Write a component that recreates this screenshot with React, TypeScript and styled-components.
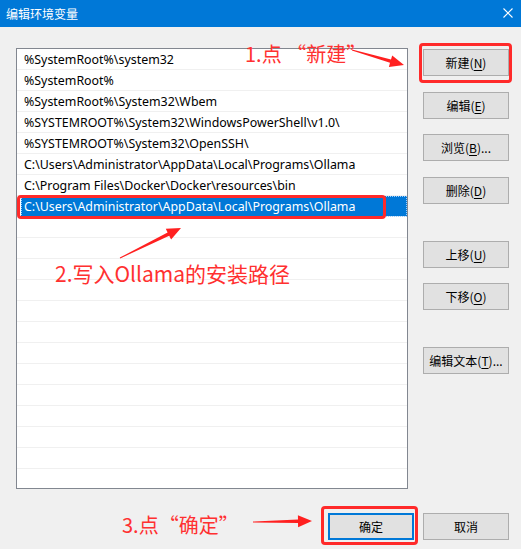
import React from "react";
import styled, { createGlobalStyle } from "styled-components";

const Global = createGlobalStyle`
  html, body { margin: 0; padding: 0; background: #f0f0f0; }
  * { box-sizing: border-box; }
`;

const UI_FONT = `"Noto Sans", "Noto Sans CJK SC", sans-serif`;
const CJK_FONT = `"Noto Sans CJK SC", "Noto Sans", sans-serif`;

const Window = styled.div`
  position: relative;
  width: 521px;
  height: 549px;
  background: #f0f0f0;
  font-family: ${CJK_FONT};
  overflow: hidden;
`;

const TitleBar = styled.div`
  height: 27px;
  background: #0078d7;
  color: #fff;
  display: flex;
  align-items: center;
  justify-content: space-between;
  padding: 0 8px 0 6px;
  font-size: 12px;
`;

const CloseIcon = styled.svg`
  width: 10px;
  height: 10px;
  display: block;
  margin-top: -2px;
`;

const Body = styled.div`
  display: flex;
  align-items: flex-start;
  gap: 15px;
  padding: 21px 12px 0 16px;
`;

const List = styled.div`
  width: 392px;
  height: 441px;
  background: #fff;
  border: 1px solid #828790;
  overflow: hidden;
`;

const Row = styled.div<{ $selected?: boolean }>`
  height: 21px;
  border-bottom: 1px solid #f0f0f0;
  display: flex;
  align-items: center;
  font-family: ${UI_FONT};
  font-size: 12.4px;
  color: ${(p) => (p.$selected ? "#fff" : "#000")};
  padding-left: ${(p) => (p.$selected ? "3px" : "7px")};
  margin-left: ${(p) => (p.$selected ? "4px" : "0")};
  background: ${(p) => (p.$selected ? "#0078d7" : "transparent")};
  outline: ${(p) => (p.$selected ? "1px dotted #9fd0ff" : "none")};
  outline-offset: -1px;
  white-space: nowrap;
`;

const ButtonColumn = styled.div`
  display: flex;
  flex-direction: column;
  padding-top: 1px;
`;

const Button = styled.button<{ $gap?: number; $default?: boolean }>`
  width: 86px;
  height: 27px;
  flex: none;
  margin-top: ${(p) => p.$gap ?? 0}px;
  background: #e1e1e1;
  border: ${(p) => (p.$default ? "2px solid #0078d7" : "1px solid #adadad")};
  font-family: ${CJK_FONT};
  font-size: 12px;
  color: #000;
  padding: 0;
  display: flex;
  align-items: center;
  justify-content: center;
  cursor: default;
  u { text-decoration: underline; text-underline-offset: 2px; }
`;

const Footer = styled.div`
  display: flex;
  justify-content: flex-end;
  gap: 9px;
  padding: 24px 12px 0 0;
`;

const Note = styled.div<{ $x: number; $y: number; $size: number }>`
  position: absolute;
  left: ${(p) => p.$x}px;
  top: ${(p) => p.$y}px;
  font-family: ${CJK_FONT};
  font-size: ${(p) => p.$size}px;
  line-height: 1;
  color: #ff3030;
  white-space: nowrap;
`;

const Highlight = styled.div<{ $x: number; $y: number; $w: number; $h: number }>`
  position: absolute;
  left: ${(p) => p.$x}px;
  top: ${(p) => p.$y}px;
  width: ${(p) => p.$w}px;
  height: ${(p) => p.$h}px;
  border: 3px solid #ff2a2a;
  border-radius: 4px;
  pointer-events: none;
`;

const Overlay = styled.svg`
  position: absolute;
  left: 0;
  top: 0;
  width: 521px;
  height: 549px;
  pointer-events: none;
`;

function arrowPoints(x1: number, y1: number, x2: number, y2: number) {
  const dx = x2 - x1;
  const dy = y2 - y1;
  const len = Math.hypot(dx, dy);
  const ux = dx / len;
  const uy = dy / len;
  const nx = -uy;
  const ny = ux;
  const head = 14;
  const hw = 6;
  const sw = 1.8;
  const bx = x2 - ux * head;
  const by = y2 - uy * head;
  const pts: [number, number][] = [
    [x1 + nx * 0.4, y1 + ny * 0.4],
    [bx + nx * sw, by + ny * sw],
    [bx + nx * hw, by + ny * hw],
    [x2, y2],
    [bx - nx * hw, by - ny * hw],
    [bx - nx * sw, by - ny * sw],
    [x1 - nx * 0.4, y1 - ny * 0.4],
  ];
  return pts.map((p) => p.map((v) => v.toFixed(1)).join(",")).join(" ");
}

const paths = [
  "%SystemRoot%\\system32",
  "%SystemRoot%",
  "%SystemRoot%\\System32\\Wbem",
  "%SYSTEMROOT%\\System32\\WindowsPowerShell\\v1.0\\",
  "%SYSTEMROOT%\\System32\\OpenSSH\\",
  "C:\\Users\\Administrator\\AppData\\Local\\Programs\\Ollama",
  "C:\\Program Files\\Docker\\Docker\\resources\\bin",
  "C:\\Users\\Administrator\\AppData\\Local\\Programs\\Ollama",
];

const TOTAL_ROWS = 21;

export default function App() {
  const rows = Array.from({ length: TOTAL_ROWS }, (_, i) => paths[i] ?? "");
  return (
    <>
      <Global />
      <Window>
        <TitleBar>
          <span>编辑环境变量</span>
          <CloseIcon viewBox="0 0 10 10">
            <path d="M0.5 0.5 L9.5 9.5 M9.5 0.5 L0.5 9.5" stroke="#fff" strokeWidth="1.1" />
          </CloseIcon>
        </TitleBar>
        <Body>
          <List>
            {rows.map((t, i) => (
              <Row key={i} $selected={i === 7}>
                {t}
              </Row>
            ))}
          </List>
          <ButtonColumn>
            <Button>新建(<u>N</u>)</Button>
            <Button $gap={16}>编辑(<u>E</u>)</Button>
            <Button $gap={15}>浏览(<u>B</u>)...</Button>
            <Button $gap={16}>删除(<u>D</u>)</Button>
            <Button $gap={37}>上移(<u>U</u>)</Button>
            <Button $gap={15}>下移(<u>O</u>)</Button>
            <Button $gap={37}>编辑文本(<u>T</u>)...</Button>
          </ButtonColumn>
        </Body>
        <Footer>
          <Button $default>确定</Button>
          <Button>取消</Button>
        </Footer>

        <Highlight $x={419} $y={43} $w={93} $h={40} />
        <Highlight $x={17} $y={195} $w={369} $h={24} />
        <Highlight $x={321} $y={506} $w={97} $h={39} />

        <Note $x={245} $y={44} $size={20}>1.点 “新建”</Note>
        <Note $x={55} $y={263} $size={21}>2.写入Ollama的安装路径</Note>
        <Note $x={122} $y={515} $size={20}>3.点“确定”</Note>

        <Overlay viewBox="0 0 521 549">
          <polygon points={arrowPoints(352, 50, 404, 65)} fill="#ff2020" />
          <polygon points={arrowPoints(120, 258, 181, 228)} fill="#ff2020" />
          <polygon points={arrowPoints(253, 522, 312, 521)} fill="#ff2020" />
        </Overlay>
      </Window>
    </>
  );
}
